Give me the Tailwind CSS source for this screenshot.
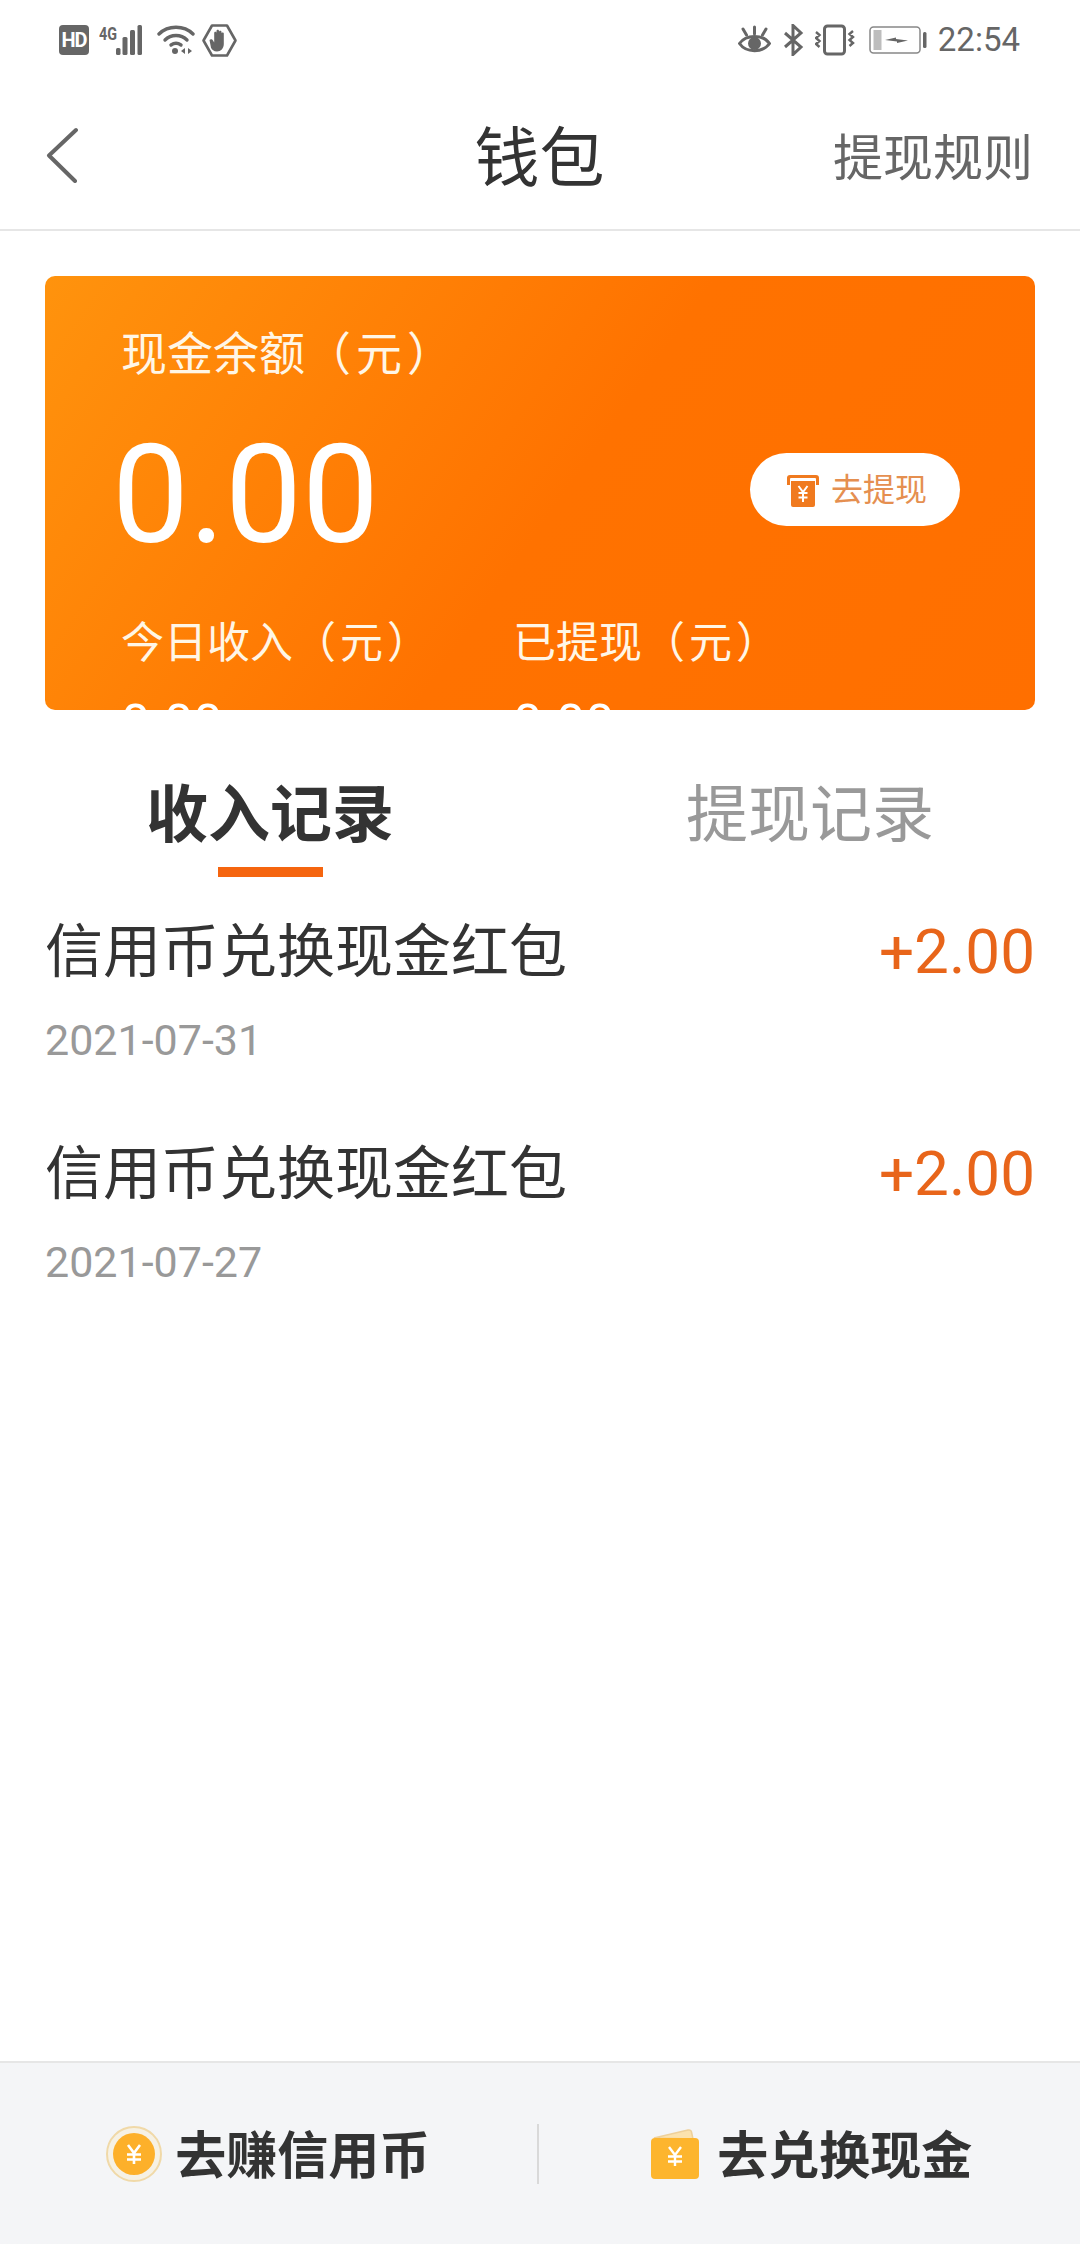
<!DOCTYPE html>
<html lang="zh-CN">

<head>
    <meta charset="UTF-8">
    <meta name="viewport" content="width=device-width, initial-scale=1.0">
    <title>钱包</title>
    <script src="https://cdn.jsdelivr.net/npm/@tailwindcss/browser@4"></script>
</head>

<body class="bg-white font-['Roboto','Noto_Sans_CJK_SC',sans-serif]">
    <div class="w-[1080px] h-[2244px] flex flex-col overflow-hidden">

        <!-- Status bar -->
        <div class="h-[80px] shrink-0 flex items-center justify-between pl-[59px] pr-[60px] text-[#666]">
            <div class="flex items-center">
                <div class="w-[30px] h-[30px] rounded-[4px] bg-[#666] text-white text-[20px] leading-[30px] font-bold text-center tracking-[-1px]">HD</div>
                <svg class="w-[52px] h-[34px] ml-[10px]" viewBox="0 0 52 34" fill="#666">
                    <text x="0" y="17" font-family="Roboto" font-size="19" font-weight="700" textLength="18" lengthAdjust="spacingAndGlyphs">4G</text>
                    <rect x="17" y="25" width="4.500" height="7" rx="1.500" />
                    <rect x="23.500" y="14" width="5" height="18" rx="1.500" />
                    <rect x="31" y="7" width="5" height="25" rx="1.500" />
                    <rect x="38.500" y="2" width="4.500" height="30" rx="1.500" />
                </svg>
                <svg class="w-[38px] h-[32px] ml-[6px]" viewBox="0 0 38 32" fill="none" stroke="#666" stroke-width="3.400" stroke-linecap="round">
                    <path d="M2 10C11 1 27 1 36 10" />
                    <path d="M8 16C14 10 24 10 30 16" />
                    <path d="M14 21C17 19 21 19 24 21" />
                    <circle cx="18" cy="27" r="3" fill="#666" stroke="none" />
                    <path d="M28 24l-4 3 4 3zM31 24l4 3-4 3z" fill="#666" stroke="none" />
                </svg>
                <svg class="w-[35px] h-[33px] ml-[7px]" viewBox="0 0 35 33" fill="#666">
                    <path d="M1.500 16.500L10 1.500H25L33.500 16.500L25 31.500H10Z" fill="none" stroke="#666" stroke-width="2.600" stroke-linejoin="round" />
                    <path d="M7.500 16c1-1.200 2.800-.8 3.500.4l1.200 2V9c0-1.600 2.300-1.600 2.300 0V7c0-1.600 2.500-1.600 2.500 0v1c0-1.600 2.500-1.600 2.500 0v1.500c0-1.400 2.300-1.400 2.300 0V20c0 4.500-3 7.500-6.800 7.500-3.300 0-5-1.700-6-3.700z" />
                </svg>
            </div>
            <div class="flex items-center">
                <svg class="w-[33px] h-[30px]" viewBox="0 0 33 30" fill="none" stroke="#666" stroke-width="3">
                    <path d="M1.500 18.500C8 9 25 9 31.500 18.500C25 28 8 28 1.500 18.500Z" />
                    <circle cx="16.500" cy="18.500" r="6.500" fill="#666" stroke="none" />
                    <path d="M16.500 2v7M5 4l3.500 6M28 4l-3.500 6" stroke-linecap="round" />
                </svg>
                <svg class="w-[21px] h-[32px] ml-[12px]" viewBox="0 0 21 32" fill="none" stroke="#666" stroke-width="3">
                    <path d="M2 9L18 23L10 30.500V1.500L18 9L2 23" />
                </svg>
                <svg class="w-[40px] h-[32px] ml-[11px]" viewBox="0 0 40 32" fill="none" stroke="#666" stroke-width="3">
                    <rect x="9.500" y="2" width="20" height="28" rx="3" />
                    <path d="M1 8l3.500 3-3.500 3 3.500 3-3.500 3 3.500 3M38 7l-3.500 3 3.500 3-3.500 3 3.500 3-3.500 3" stroke-width="2.400" />
                </svg>
                <svg class="w-[58px] h-[30px] ml-[14px]" viewBox="0 0 58 30" fill="none">
                    <rect x="1" y="2" width="50" height="26" rx="3.500" stroke="#888" stroke-width="1.500" />
                    <rect x="4.500" y="5" width="8" height="20" fill="#bdbdbd" />
                    <path d="M16 15L27 12.500V14L39 15.500L28 18V16.500Z" fill="#666" />
                    <rect x="54" y="7" width="3.500" height="16" rx="1.500" fill="#666" />
                </svg>
                <span class="ml-[11px] text-[33px] leading-[40px]">22:54</span>
            </div>
        </div>

        <!-- Header -->
        <header class="h-[151px] shrink-0 flex items-center border-b-2 border-[#e6e6e6]">
            <div class="flex-1 pl-[46px]">
                <svg class="w-[34px] h-[56px]" viewBox="0 0 34 56" fill="none" stroke="#666" stroke-width="4" stroke-linecap="round" stroke-linejoin="round">
                    <path d="M30 3L3 28.500L29 54" />
                </svg>
            </div>
            <h1 class="pt-[8px] text-[65px] leading-[80px] text-[#333]">钱包</h1>
            <div class="flex-1 pt-[8px] text-right pr-[47px] text-[50px] leading-[70px] text-[#666]">提现规则</div>
        </header>

        <main class="flex-1">
            <!-- Balance card -->
            <section class="mt-[45px] mx-[45px] h-[434px] rounded-[10px] overflow-hidden pl-[76px] pt-[44px] text-white bg-[linear-gradient(125deg,#ff930d,#ff7200_52%,#ff6f00)]">
                <p class="h-[60px] text-[46px] leading-[60px] text-[#fff6e6]">现金余额<span class="font-['Noto_Sans_CJK_TC'] tracking-[5px]">（元）</span></p>
                <div class="mt-[35px] h-[160px] flex items-center justify-between pr-[75px]">
                    <span class="text-[137px] leading-[160px] -ml-[9px]">0.00</span>
                    <button class="mb-[11px] w-[210px] h-[73px] rounded-full bg-white flex items-center pl-[36px] gap-[11px]">
                        <svg class="w-[34px] h-[36px]" viewBox="0 0 34 36">
                            <path d="M4 3h26a3 3 0 0 1 3 3v7h-3V7a1 1 0 0 0-1-1H5a1 1 0 0 0-1 1v6H1V6a3 3 0 0 1 3-3z" fill="#f07a1f" />
                            <path d="M5 9h24v24a2 2 0 0 1-2 2H7a2 2 0 0 1-2-2z" fill="#f07a1f" />
                            <path d="M12.500 14l4.500 6 4.500-6M12.500 21h9M12.500 25.500h9M17 20v10" fill="none" stroke="#fff" stroke-width="2" />
                        </svg>
                        <span class="text-[32px] leading-[40px] text-[#e58f50]">去提现</span>
                    </button>
                </div>
                <div class="mt-[34px] flex">
                    <p class="w-[392px] h-[60px] text-[43px] leading-[60px] text-[#fff6e6]">今日收入<span class="font-['Noto_Sans_CJK_TC'] tracking-[4px]">（元）</span></p>
                    <p class="h-[60px] text-[43px] leading-[60px] text-[#fff6e6]">已提现<span class="font-['Noto_Sans_CJK_TC'] tracking-[4px]">（元）</span></p>
                </div>
                <div class="mt-[25px] flex text-[52px] leading-[60px]">
                    <span class="w-[392px]">0.00</span>
                    <span>0.00</span>
                </div>
            </section>

            <!-- Tabs -->
            <div class="mt-[66px] flex">
                <div class="w-1/2 flex flex-col items-center">
                    <span class="h-[80px] text-[62px] leading-[80px] font-bold text-[#333]">收入记录</span>
                    <span class="mt-[11px] w-[105px] h-[10px] bg-[#f5650f]"></span>
                </div>
                <div class="w-1/2 flex flex-col items-center">
                    <span class="h-[80px] text-[62px] leading-[80px] text-[#999]">提现记录</span>
                </div>
            </div>

            <!-- Records -->
            <ul class="mt-[40px] px-[45px] flex flex-col gap-[74px]">
                <li class="flex items-start justify-between">
                    <div>
                        <p class="h-[70px] text-[58px] leading-[70px] text-[#333]">信用币兑换现金红包</p>
                        <p class="mt-[28px] h-[50px] text-[43px] leading-[50px] text-[#999]">2021-07-31</p>
                    </div>
                    <span class="text-[62px] leading-[70px] text-[#e8651a]">+2.00</span>
                </li>
                <li class="flex items-start justify-between">
                    <div>
                        <p class="h-[70px] text-[58px] leading-[70px] text-[#333]">信用币兑换现金红包</p>
                        <p class="mt-[28px] h-[50px] text-[43px] leading-[50px] text-[#999]">2021-07-27</p>
                    </div>
                    <span class="text-[62px] leading-[70px] text-[#e8651a]">+2.00</span>
                </li>
            </ul>
        </main>

        <!-- Bottom actions -->
        <footer class="h-[183px] shrink-0 flex items-center bg-[#f4f5f7] border-t-2 border-[#e6e6e6]">
            <div class="flex-1 flex items-center justify-center gap-[13px]">
                <svg class="w-[56px] h-[56px]" viewBox="0 0 56 56">
                    <circle cx="28" cy="28" r="27" fill="#f6f1e4" stroke="#f0d9a8" stroke-width="2" />
                    <circle cx="28" cy="28" r="21" fill="#fdb02a" />
                    <path d="M22 19l6 8 6-8M21 28.500h14M21 33.500h14M28 27v11" fill="none" stroke="#fff" stroke-width="2.600" />
                </svg>
                <span class="pt-[6px] text-[51px] leading-[70px] font-bold text-[#333]">去赚信用币</span>
            </div>
            <div class="w-[2px] h-[60px] bg-[#d9d9d9]"></div>
            <div class="flex-1 flex items-center justify-center gap-[16px] pl-[5px]">
                <svg class="w-[50px] h-[50px]" viewBox="0 0 50 50">
                    <path d="M3 9L37 1q3-.5 3.500 2L42 10z" fill="#fbe2ae" stroke="#eed09a" stroke-width="1.500" />
                    <rect x="0" y="9" width="48" height="41" rx="4" fill="#fdb52e" />
                    <path d="M18 18l6 8 6-8M17 27.500h14M17 32.500h14M24 26v11" fill="none" stroke="#fff" stroke-width="2.400" />
                </svg>
                <span class="pt-[6px] text-[51px] leading-[70px] font-bold text-[#333]">去兑换现金</span>
            </div>
        </footer>
    </div>
</body>

</html>
